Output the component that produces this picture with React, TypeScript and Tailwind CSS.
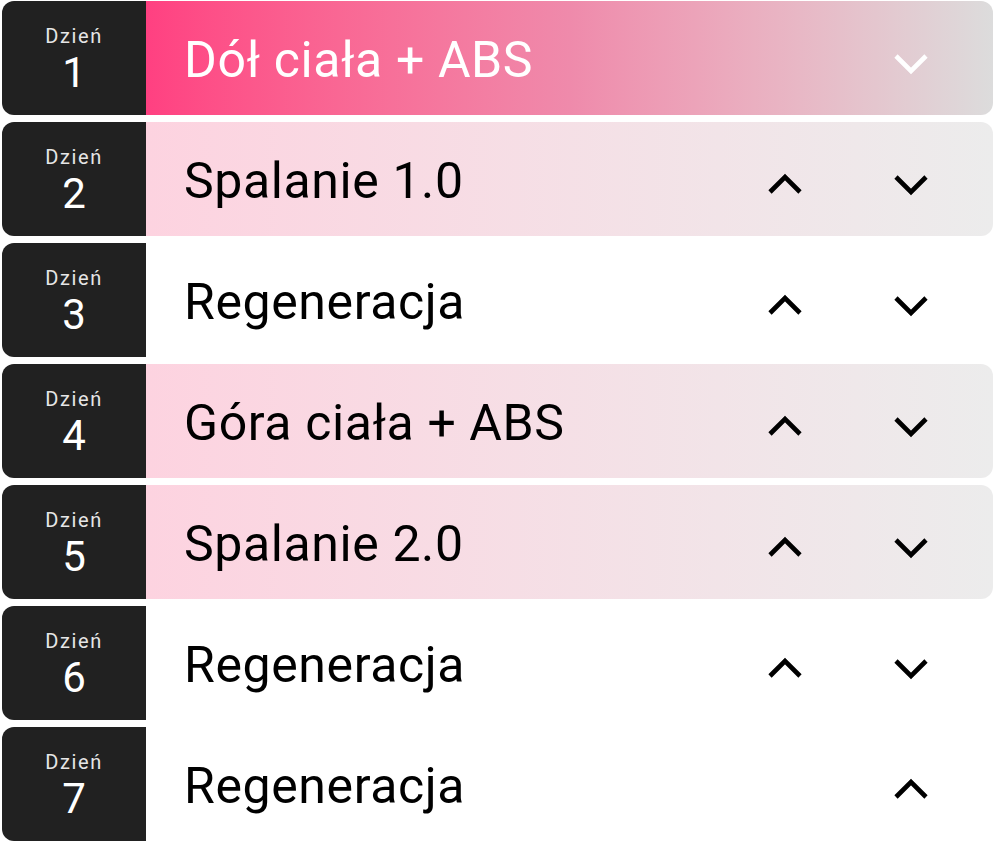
import React from 'react';

type Day = {
  num: number;
  title: string;
  variant: 'active' | 'tinted' | 'plain';
  up: boolean;
  down: boolean;
};

const days: Day[] = [
  { num: 1, title: 'Dół ciała + ABS', variant: 'active', up: false, down: true },
  { num: 2, title: 'Spalanie 1.0', variant: 'tinted', up: true, down: true },
  { num: 3, title: 'Regeneracja', variant: 'plain', up: true, down: true },
  { num: 4, title: 'Góra ciała + ABS', variant: 'tinted', up: true, down: true },
  { num: 5, title: 'Spalanie 2.0', variant: 'tinted', up: true, down: true },
  { num: 6, title: 'Regeneracja', variant: 'plain', up: true, down: true },
  { num: 7, title: 'Regeneracja', variant: 'plain', up: true, down: false },
];

function Chevron({ dir, color }: { dir: 'up' | 'down'; color: string }) {
  const points = dir === 'up' ? '2,19 17,4 32,19' : '2,4 17,19 32,4';
  return (
    <svg width="34" height="23" viewBox="0 0 34 23" fill="none">
      <polyline points={points} stroke={color} strokeWidth="4.6" strokeLinejoin="miter" />
    </svg>
  );
}

function DayRow({ day }: { day: Day }) {
  const bg =
    day.variant === 'active'
      ? 'bg-gradient-to-r from-[#ff4081] via-[#ef8aab] to-[#dcdcdc]'
      : day.variant === 'tinted'
        ? 'bg-gradient-to-r from-[#fdd3e0] to-[#ececec]'
        : 'bg-white';
  const textColor = day.variant === 'active' ? 'text-white' : 'text-black';
  const iconColor = day.variant === 'active' ? '#ffffff' : '#000000';

  return (
    <div className="flex h-[114px] rounded-[12px] overflow-hidden">
      <div className="w-[144px] shrink-0 bg-[#212121] flex flex-col items-center justify-center">
        <span className="text-[20px] leading-[24px] tracking-[1.6px] text-[#e6e6e6]">Dzień</span>
        <span className="mt-[5px] text-[42px] leading-[40px] text-white">{day.num}</span>
      </div>
      <div className={`flex-1 flex items-center ${bg}`}>
        <span className={`pl-[38px] pt-[3px] text-[50px] leading-none tracking-[0.6px] ${textColor}`}>
          {day.title}
        </span>
        <div className="ml-auto flex items-center pr-[19px] pt-[10px]">
          {day.up && (
            <div className="w-[126px] flex justify-center">
              <Chevron dir="up" color={iconColor} />
            </div>
          )}
          {day.down && (
            <div className="w-[126px] flex justify-center">
              <Chevron dir="down" color={iconColor} />
            </div>
          )}
        </div>
      </div>
    </div>
  );
}

export default function App() {
  return (
    <div className="min-h-[842px] bg-white px-[2px] pt-[1px] flex flex-col gap-[7px] font-['Roboto',sans-serif]">
      {days.map((d) => (
        <DayRow key={d.num} day={d} />
      ))}
    </div>
  );
}
